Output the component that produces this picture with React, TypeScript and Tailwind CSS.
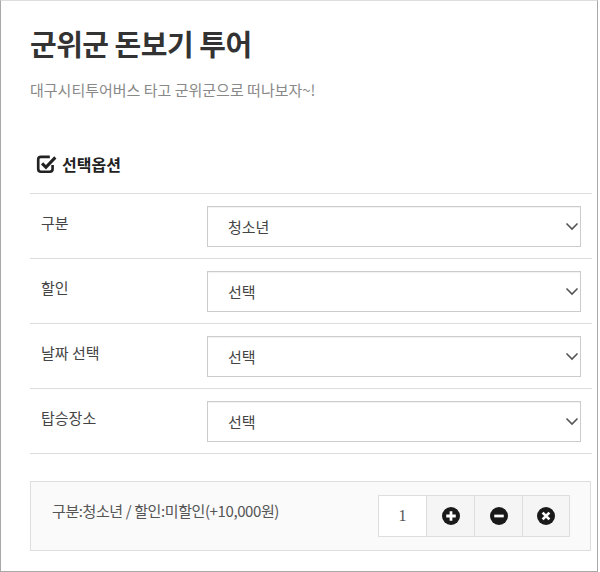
const font = { fontFamily: '"Noto Sans CJK KR", "Noto Sans", sans-serif' };

const Chevron = () => (
  <svg width="14" height="9" viewBox="0 0 14 9" className="shrink-0">
    <path d="M1.5 1.5 L7 7 L12.5 1.5" fill="none" stroke="#555" strokeWidth="1.6" />
  </svg>
);

const CheckSquare = () => (
  <svg width="21" height="20" viewBox="0 0 19 18">
    <path
      d="M12.5 2.5 H4.5 Q2 2.5 2 5 V13.5 Q2 16 4.5 16 H12.5 Q15 16 15 13.5 V10"
      fill="none"
      stroke="#222"
      strokeWidth="2.4"
    />
    <path d="M5.5 8.5 L9 12 L17.5 3" fill="none" stroke="#222" strokeWidth="2.8" />
  </svg>
);

const CircleIcon = ({ kind }: { kind: "plus" | "minus" | "x" }) => (
  <svg width="18" height="18" viewBox="0 0 17 17">
    <circle cx="8.5" cy="8.5" r="8.5" fill="#1a1a1a" />
    {kind === "plus" && (
      <path d="M8.5 4 V13 M4 8.5 H13" stroke="#fff" strokeWidth="2.6" />
    )}
    {kind === "minus" && <path d="M4 8.5 H13" stroke="#fff" strokeWidth="2.6" />}
    {kind === "x" && (
      <path d="M5.3 5.3 L11.7 11.7 M11.7 5.3 L5.3 11.7" stroke="#fff" strokeWidth="2.6" />
    )}
  </svg>
);

const rows = [
  { label: "구분", value: "청소년" },
  { label: "할인", value: "선택" },
  { label: "날짜 선택", value: "선택" },
  { label: "탑승장소", value: "선택" },
];

export default function App() {
  return (
    <div
      className="w-[598px] h-[572px] border border-[#a8a8a8] border-t-[#ddd] bg-white text-[#333]"
      style={font}
    >
      <div className="pl-[29px] pr-[5px]">
        <h1 className="mt-[20px] text-[29px] font-bold leading-[44px] tracking-[-0.5px] text-[#333]">
          군위군 돈보기 투어
        </h1>
        <p className="mt-[13px] text-[15px] leading-[24px] text-[#888]">
          대구시티투어버스 타고 군위군으로 떠나보자~!
        </p>

        <div className="mt-[50px] flex items-center gap-[5px] pl-[6px] h-[24px]">
          <CheckSquare />
          <span className="text-[16px] font-bold text-[#222]">선택옵션</span>
        </div>

        <div className="mt-[17px] border-b border-[#ddd]">
          {rows.map((r) => (
            <div
              key={r.label}
              className="flex h-[65px] items-center border-t border-[#ddd] pr-[11px]"
            >
              <div className="w-[177px] pl-[11px] pb-[5px] text-[15px] text-[#444]">
                {r.label}
              </div>
              <div className="flex h-[41px] flex-1 items-center justify-between border border-[#ccc] pl-[20px] pr-[1px] shadow-[inset_0_1px_1px_rgba(0,0,0,0.06)]">
                <span className="pt-[3px] text-[15px] text-[#444]">{r.value}</span>
                <Chevron />
              </div>
            </div>
          ))}
        </div>

        <div className="mt-[27px] mr-[1px] flex h-[70px] items-center justify-between border border-[#ddd] bg-[#fafafa] pl-[21px] pr-[20px]">
          <span className="pb-[10px] text-[15px] tracking-[-0.4px] text-[#555]">
            구분:청소년 / 할인:미할인(+10,000원)
          </span>
          <div className="flex h-[42px] border border-[#ddd]">
            <div className="flex w-[47px] items-center justify-center bg-white text-[16px] text-[#555]" style={{ fontFamily: '"Liberation Serif", serif' }}>
              1
            </div>
            <div className="flex w-[48px] items-center justify-center border-l border-[#ddd] bg-[#f5f5f5]">
              <CircleIcon kind="plus" />
            </div>
            <div className="flex w-[48px] items-center justify-center border-l border-[#ddd] bg-[#f5f5f5]">
              <CircleIcon kind="minus" />
            </div>
            <div className="flex w-[47px] items-center justify-center border-l border-[#ddd] bg-[#f5f5f5]">
              <CircleIcon kind="x" />
            </div>
          </div>
        </div>
      </div>
    </div>
  );
}
